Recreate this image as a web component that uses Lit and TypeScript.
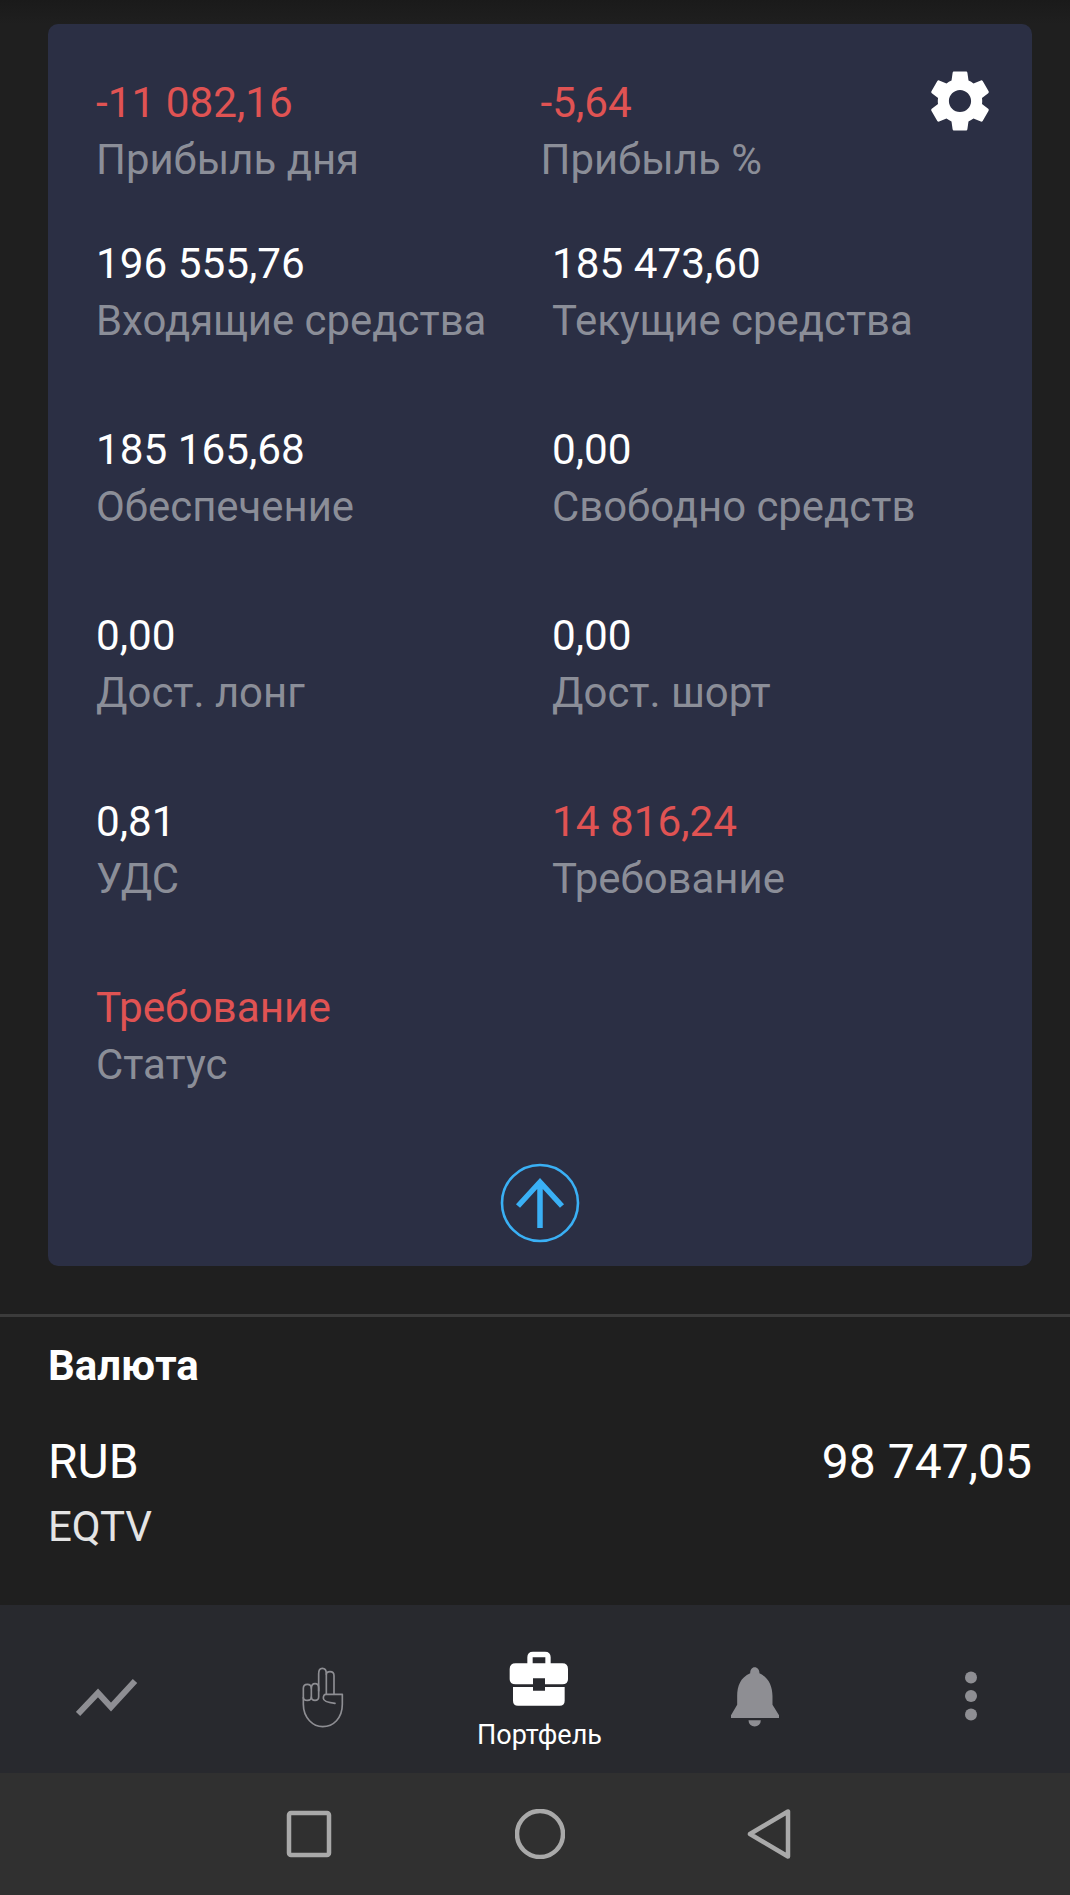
import { LitElement, html, css, svg } from "lit";
import { customElement } from "lit/decorators.js";

type Cell = { v: string; l: string; red?: boolean };

const rows: Cell[][] = [
  [{ v: "196 555,76", l: "Входящие средства" }, { v: "185 473,60", l: "Текущие средства" }],
  [{ v: "185 165,68", l: "Обеспечение" }, { v: "0,00", l: "Свободно средств" }],
  [{ v: "0,00", l: "Дост. лонг" }, { v: "0,00", l: "Дост. шорт" }],
  [{ v: "0,81", l: "УДС" }, { v: "14 816,24", l: "Требование", red: true }],
  [{ v: "Требование", l: "Статус", red: true }],
];

const gear = svg`<path d="M19.14 12.94c.04-.3.06-.61.06-.94 0-.32-.02-.64-.07-.94l2.03-1.58c.18-.14.23-.41.12-.61l-1.92-3.32c-.12-.22-.37-.29-.59-.22l-2.39.96c-.5-.38-1.03-.7-1.62-.94l-.36-2.54c-.04-.24-.24-.41-.48-.41h-3.84c-.24 0-.43.17-.47.41l-.36 2.54c-.59.24-1.13.57-1.62.94l-2.39-.96c-.22-.08-.47 0-.59.22L2.74 8.87c-.12.21-.08.47.12.61l2.03 1.58c-.05.3-.09.63-.09.94s.02.64.07.94l-2.03 1.58c-.18.14-.23.41-.12.61l1.92 3.32c.12.22.37.29.59.22l2.39-.96c.5.38 1.03.7 1.62.94l.36 2.54c.05.24.24.41.48.41h3.84c.24 0 .44-.17.47-.41l.36-2.54c.59-.24 1.13-.56 1.62-.94l2.39.96c.22.08.47 0 .59-.22l1.92-3.32c.12-.22.07-.47-.12-.61l-2.01-1.58zM12 15.6c-1.98 0-3.6-1.62-3.6-3.6s1.62-3.6 3.6-3.6 3.6 1.62 3.6 3.6-1.62 3.6-3.6 3.6z"/>`;

@customElement("app-root")
export class AppRoot extends LitElement {
  static styles = css`
    :host {
      display: block;
      width: 1070px;
      height: 1895px;
      overflow: hidden;
      background: #1f1f1f;
      font-family: Roboto, "Noto Sans", sans-serif;
      color: #fff;
    }
    .page {
      height: 1895px;
      display: flex;
      flex-direction: column;
    }
    .main {
      flex: 1;
      min-height: 0;
      padding-top: 24px;
      background: linear-gradient(#1a1a1a 0, #1f1f1f 24px);
    }
    .card {
      margin: 0 38px 0 48px;
      height: 1242px;
      box-sizing: border-box;
      border-radius: 10px;
      background: #2b2f44;
      padding: 50px 0 0 48px;
      display: flex;
      flex-direction: column;
    }
    .top {
      display: flex;
      height: 114px;
      margin-bottom: 47px;
    }
    .top .cell {
      width: 444.5px;
    }
    .top .cell + .cell {
      width: 382px;
    }
    .gear {
      width: 74px;
      height: 74px;
      fill: #fff;
      margin-top: -10px;
      flex: none;
    }
    .row {
      display: flex;
      height: 114px;
      margin-bottom: 72px;
    }
    .row .cell {
      width: 456px;
    }
    .val {
      font-size: 42.25px;
      line-height: 57px;
      white-space: nowrap;
    }
    .lab {
      font-size: 41.9px;
      line-height: 57px;
      color: #8b8e98;
      white-space: nowrap;
    }
    .red {
      color: #e05353;
    }
    .up {
      align-self: center;
      margin: -2px 0 0 -48px;
      display: block;
    }
    .divider {
      height: 3px;
      margin-top: 48px;
      background: #3b3b3b;
    }
    .cur {
      padding: 0 38px 0 48px;
    }
    .cur h2 {
      margin: 26px 0 0;
      font-size: 42px;
      line-height: 46px;
      font-weight: 700;
    }
    .cur-row {
      display: flex;
      justify-content: space-between;
      margin-top: 46px;
      font-size: 48px;
      line-height: 54px;
    }
    .eqtv {
      margin-top: 13px;
      font-size: 42px;
      line-height: 50px;
      color: #e4e4e4;
    }
    nav {
      height: 168px;
      background: #28292e;
      display: flex;
      justify-content: space-between;
      padding: 0 39px 0 47px;
      flex: none;
    }
    .item {
      width: 120px;
      height: 168px;
      display: flex;
      flex-direction: column;
      align-items: center;
      justify-content: flex-start;
    }
    .item svg {
      display: block;
    }
    .trend { margin-top: 73px; }
    .hand { margin: 61px 0 0 -2px; }
    .bag { margin-top: 46px; }
    .bell { margin-top: 62px; }
    .dots { margin-top: 66px; }
    .item span {
      margin: 13px 0 0 1px;
      font-size: 27px;
      line-height: 30px;
      color: #fff;
      white-space: nowrap;
    }
    .sys {
      height: 122px;
      background: #303030;
      flex: none;
      display: flex;
      justify-content: center;
      align-items: flex-start;
      gap: 181px;
      padding: 36px 0 0 10px;
      box-sizing: border-box;
    }
    .sys svg {
      display: block;
      fill: none;
      stroke: #a9a9a9;
      stroke-width: 4.5;
      stroke-linejoin: round;
    }
  `;

  private cell(c: Cell) {
    return html`<div class="cell">
      <div class="val ${c.red ? "red" : ""}">${c.v}</div>
      <div class="lab">${c.l}</div>
    </div>`;
  }

  render() {
    return html`<div class="page">
      <div class="main">
        <div class="card">
          <div class="top">
            ${this.cell({ v: "-11 082,16", l: "Прибыль дня", red: true })}
            ${this.cell({ v: "-5,64", l: "Прибыль %", red: true })}
            <svg class="gear" viewBox="0 0 24 24">${gear}</svg>
          </div>
          ${rows.map((r) => html`<div class="row">${r.map((c) => this.cell(c))}</div>`)}
          <svg class="up" width="80" height="80" viewBox="0 0 80 80" fill="none" stroke="#3ab0f5">
            <circle cx="40" cy="40" r="38" stroke-width="2.6" />
            <path d="M40 65V19M18 43L40 19 62 43" stroke-width="5.5" />
          </svg>
        </div>
        <div class="divider"></div>
        <div class="cur">
          <h2>Валюта</h2>
          <div class="cur-row"><span>RUB</span><span>98 747,05</span></div>
          <div class="eqtv">EQTV</div>
        </div>
      </div>
      <nav>
        <div class="item">
          <svg class="trend" width="62" height="40" viewBox="0 0 62 40" fill="none" stroke="#8e8e93" stroke-width="6">
            <path d="M2 36L22 15 35 29 59 3" />
          </svg>
        </div>
        <div class="item">
          <svg class="hand" width="45" height="63.3" viewBox="750 75 135 190" fill="none" stroke="#8e8e93" stroke-width="5" stroke-linejoin="round" stroke-linecap="round">
            <path d="M760 170V190C760 232 790 257 818 257C850 257 877 232 877 190V160H828Q820 160 820 172Q820 184 855 187" />
            <path d="M760 170V142Q760 130 772 130Q784 130 784 142V168Q784 178 772 178Q760 178 760 170Z" />
            <path d="M784 142Q784 128 795 128Q806 128 806 140V168Q806 178 795 178Q784 178 784 168" />
            <path d="M806 150V98Q806 82 817 82Q829 82 829 98V158" />
            <path d="M829 100Q829 92 840 92Q852 92 852 104V160" />
          </svg>
        </div>
        <div class="item">
          <svg class="bag" width="62" height="56" viewBox="140 33 180 168" fill="#fff">
            <path fill-rule="evenodd" d="M195 70V52Q195 35 212 35H248Q265 35 265 52V70H300Q317 70 317 87V118Q317 133 300 133H248V115H212V133H160Q142 133 142 118V87Q142 70 160 70ZM211 70H249V52H211Z" />
            <path d="M152 141H212V152H248V141H307V182Q307 197 292 197H167Q152 197 152 182Z" />
          </svg>
          <span>Портфель</span>
        </div>
        <div class="item">
          <svg class="bell" width="48" height="59.6" viewBox="787 85 140 173" fill="#8e8e93">
            <path d="M856 85C848 85 843 92 843 103C815 115 805 140 805 170V195L787 225V233H927V225L908 195V170C908 140 897 115 870 103C870 92 864 85 856 85Z" />
            <path d="M838 240H874A18 18 0 0 1 838 240Z" />
          </svg>
        </div>
        <div class="item">
          <svg class="dots" width="14" height="50" viewBox="0 0 14 50" fill="#8e8e93">
            <circle cx="7" cy="6.5" r="6" />
            <circle cx="7" cy="25" r="6" />
            <circle cx="7" cy="43.5" r="6" />
          </svg>
        </div>
      </nav>
      <div class="sys">
        <svg width="50" height="50" viewBox="0 0 50 50"><rect x="5" y="4" width="40" height="42" rx="2" /></svg>
        <svg width="50" height="50" viewBox="0 0 50 50"><circle cx="25" cy="25" r="23" /></svg>
        <svg width="50" height="50" viewBox="0 0 50 50"><path d="M42 2.5V47.5L4 25Z" /></svg>
      </div>
    </div>`;
  }
}
